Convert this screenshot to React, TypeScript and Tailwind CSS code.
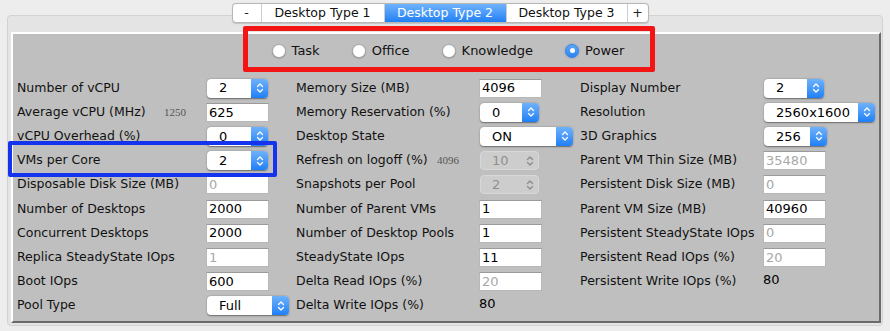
import React from 'react'

type Field =
  | { label: string; hint?: string; kind: 'input'; value: string; disabled?: boolean; w?: number }
  | { label: string; hint?: string; kind: 'select'; value: string; w: number }
  | { label: string; hint?: string; kind: 'stepper'; value: string; w: number }
  | { label: string; hint?: string; kind: 'text'; value: string }

const left: Field[] = [
  { label: 'Number of vCPU', kind: 'select', value: '2', w: 61 },
  { label: 'Average vCPU (MHz)', hint: '1250', kind: 'input', value: '625' },
  { label: 'vCPU Overhead (%)', kind: 'select', value: '0', w: 61 },
  { label: 'VMs per Core', kind: 'select', value: '2', w: 61 },
  { label: 'Disposable Disk Size (MB)', kind: 'input', value: '0', disabled: true },
  { label: 'Number of Desktops', kind: 'input', value: '2000' },
  { label: 'Concurrent Desktops', kind: 'input', value: '2000' },
  { label: 'Replica SteadyState IOps', kind: 'input', value: '1', disabled: true },
  { label: 'Boot IOps', kind: 'input', value: '600' },
  { label: 'Pool Type', kind: 'select', value: 'Full', w: 82 },
]

const middle: Field[] = [
  { label: 'Memory Size (MB)', kind: 'input', value: '4096' },
  { label: 'Memory Reservation (%)', kind: 'select', value: '0', w: 59 },
  { label: 'Desktop State', kind: 'select', value: 'ON', w: 93 },
  { label: 'Refresh on logoff (%)', hint: '4096', kind: 'stepper', value: '10', w: 59 },
  { label: 'Snapshots per Pool', kind: 'stepper', value: '2', w: 59 },
  { label: 'Number of Parent VMs', kind: 'input', value: '1' },
  { label: 'Number of Desktop Pools', kind: 'input', value: '1' },
  { label: 'SteadyState IOps', kind: 'input', value: '11' },
  { label: 'Delta Read IOps (%)', kind: 'input', value: '20', disabled: true },
  { label: 'Delta Write IOps (%)', kind: 'text', value: '80' },
]

const right: Field[] = [
  { label: 'Display Number', kind: 'select', value: '2', w: 60 },
  { label: 'Resolution', kind: 'select', value: '2560x1600', w: 111 },
  { label: '3D Graphics', kind: 'select', value: '256', w: 63 },
  { label: 'Parent VM Thin Size (MB)', kind: 'input', value: '35480', disabled: true },
  { label: 'Persistent Disk Size (MB)', kind: 'input', value: '0', disabled: true },
  { label: 'Parent VM Size (MB)', kind: 'input', value: '40960' },
  { label: 'Persistent SteadyState IOps', kind: 'input', value: '0', disabled: true },
  { label: 'Persistent Read IOps (%)', kind: 'input', value: '20', disabled: true },
  { label: 'Persistent Write IOps (%)', kind: 'text', value: '80' },
]

function Chevrons({ color }: { color: string }) {
  return (
    <svg width="8" height="12" viewBox="0 0 8 12" fill="none">
      <path d="M1.5 4.5 L4 2 L6.5 4.5" stroke={color} strokeWidth="1.3" strokeLinecap="round" strokeLinejoin="round" />
      <path d="M1.5 7.5 L4 10 L6.5 7.5" stroke={color} strokeWidth="1.3" strokeLinecap="round" strokeLinejoin="round" />
    </svg>
  )
}

function Control({ f }: { f: Field }) {
  if (f.kind === 'input') {
    return (
      <div
        className={`h-[19px] w-[63px] bg-white border border-[#b8b8b8] border-t-[#9a9a9a] pl-[2px] flex items-center text-[13px] ${
          f.disabled ? 'text-[#a8a8a8] bg-[#fbfbfb]' : 'text-black'
        }`}
      >
        {f.value}
      </div>
    )
  }
  if (f.kind === 'select') {
    return (
      <div
        className="ml-[1px] h-[19px] flex rounded-[4px] bg-white shadow-[0_0.5px_1.5px_rgba(0,0,0,0.45)]"
        style={{ width: f.w }}
      >
        <div className="flex-1 pl-[12px] flex items-center text-[13px] text-black">{f.value}</div>
        <div className="w-[17px] rounded-r-[4px] bg-gradient-to-b from-[#6db2fb] to-[#1c7ff5] flex items-center justify-center">
          <Chevrons color="#ffffff" />
        </div>
      </div>
    )
  }
  if (f.kind === 'stepper') {
    return (
      <div
        className="ml-[1px] h-[19px] flex rounded-[4px] bg-[#cdcdcd] border border-[#d8d8d8]"
        style={{ width: f.w }}
      >
        <div className="flex-1 pl-[11px] flex items-center text-[13px] text-[#8f8f8f]">{f.value}</div>
        <div className="w-[17px] flex items-center justify-center">
          <Chevrons color="#8a8a8a" />
        </div>
      </div>
    )
  }
  return <div className="text-[13px] text-black -mt-[4px]">{f.value}</div>
}

function Column({ fields, width, labelWidth }: { fields: Field[]; width: number; labelWidth: number }) {
  return (
    <div className="flex flex-col" style={{ width }}>
      {fields.map((f) => (
        <div key={f.label} className="h-[24.2px] flex items-center">
          <div className="flex items-center shrink-0" style={{ width: labelWidth }}>
            <span className="text-[12.5px] text-[#111]">{f.label}</span>
            {f.hint && (
              <span className="ml-auto mr-[20px] text-[11px] text-[#555] font-['Liberation_Serif',serif]">{f.hint}</span>
            )}
          </div>
          <Control f={f} />
        </div>
      ))}
    </div>
  )
}

function Radio({ label, checked }: { label: string; checked?: boolean }) {
  return (
    <div className="flex items-center gap-[6px]">
      {checked ? (
        <div className="w-[14px] h-[14px] rounded-full bg-gradient-to-b from-[#5ba6f9] to-[#2a84f1] border border-[#3a83df] flex items-center justify-center shadow-[0_0_2px_rgba(40,120,240,0.6)]">
          <div className="w-[5px] h-[5px] rounded-full bg-white" />
        </div>
      ) : (
        <div className="w-[14px] h-[14px] rounded-full bg-white border border-[#a9a9a9] shadow-[0_0.5px_1px_rgba(0,0,0,0.3)]" />
      )}
      <span className="text-[13px] text-[#111]">{label}</span>
    </div>
  )
}

export default function App() {
  const tabs = ['Desktop Type 1', 'Desktop Type 2', 'Desktop Type 3']
  const tabWidths = [123, 122, 121]

  return (
    <div className="relative w-[890px] h-[331px] bg-[#ededed] pt-[3px] font-['DejaVu_Sans',sans-serif] overflow-hidden">
      {/* segmented tab control */}
      <div className="relative z-10 flex justify-center pr-[10px]">
        <div className="flex h-[20px] bg-white border border-[#b7b7b7] rounded-[4px] overflow-hidden text-[12.5px] shadow-[0_0.5px_1px_rgba(0,0,0,0.15)]">
          <div className="w-[28px] flex items-center justify-center text-[#222]">-</div>
          {tabs.map((t, i) => (
            <div
              key={t}
              className={`flex items-center justify-center border-l border-[#cdcdcd] ${
                i === 1 ? 'bg-gradient-to-b from-[#6eb3fb] to-[#1d7ff4] text-white' : 'text-[#111]'
              }`}
              style={{ width: tabWidths[i] }}
            >
              {t}
            </div>
          ))}
          <div className="w-[21px] flex items-center justify-center border-l border-[#cdcdcd] text-[#222]">+</div>
        </div>
      </div>

      {/* outer tab panel */}
      <div className="-mt-[8px] mx-[7px] h-[311px] bg-[#e4e4e4] border border-[#d2d2d2] rounded-[4px] pt-[16px] pl-[3px] pr-[1px]">
        <div className="h-[291px] bg-[#bfbfbf] border-2 border-t-white border-l-white border-r-[#6a6a6a] border-b-[#6a6a6a]">
          <div className="h-[42px] flex items-center justify-center gap-[32px] pb-[9px] pl-[4px]">
            <Radio label="Task" />
            <Radio label="Office" />
            <Radio label="Knowledge" />
            <Radio label="Power" checked />
          </div>
          <div className="flex pl-[4px]">
            <Column fields={left} width={280} labelWidth={189} />
            <Column fields={middle} width={285} labelWidth={183} />
            <Column fields={right} width={300} labelWidth={183} />
          </div>
        </div>
      </div>

      {/* annotation marks */}
      <div className="absolute left-[243px] top-[26px] w-[412px] h-[46px] border-[5px] border-[#f31414] rounded-[2px]" />
      <div className="absolute left-[8px] top-[141px] w-[269px] h-[36px] border-[4px] border-[#1533ec] rounded-[2px]" />
    </div>
  )
}
